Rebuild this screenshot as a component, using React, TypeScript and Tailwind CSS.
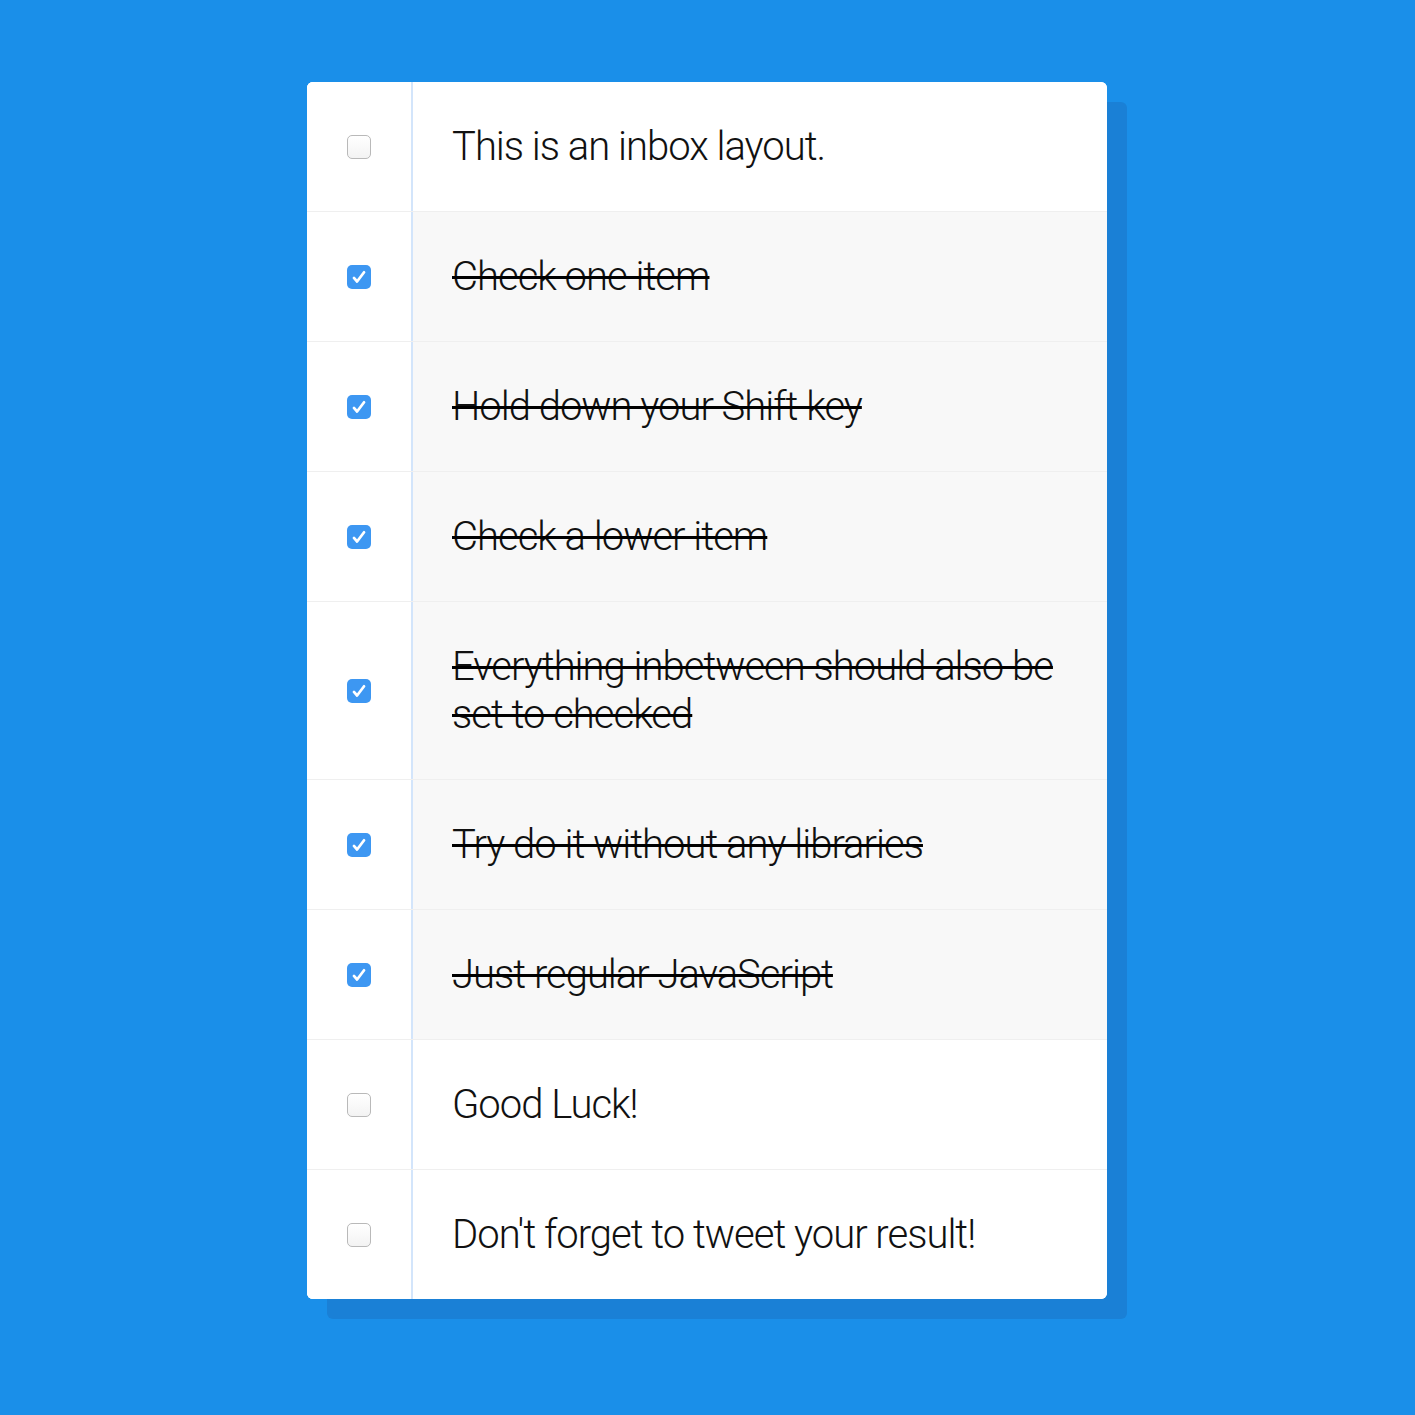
import { useState } from "react";

const initialItems = [
  { text: "This is an inbox layout.", done: false },
  { text: "Check one item", done: true },
  { text: "Hold down your Shift key", done: true },
  { text: "Check a lower item", done: true },
  { text: "Everything inbetween should also be set to checked", done: true },
  { text: "Try do it without any libraries", done: true },
  { text: "Just regular JavaScript", done: true },
  { text: "Good Luck!", done: false },
  { text: "Don't forget to tweet your result!", done: false },
];

export default function App() {
  const [items, setItems] = useState(initialItems);

  const toggle = (i: number) => {
    setItems(items.map((it, idx) => (idx === i ? { ...it, done: !it.done } : it)));
  };

  return (
    <div className="min-h-[1415px] bg-[#1a8fe9] pt-[82px] pb-[97px] font-['Helvetica_Neue',Roboto,sans-serif]">
      <div className="ml-[307px] w-[800px] bg-white rounded-[6px] overflow-hidden shadow-[20px_20px_0_#1a80d6]">
        {items.map((it, i) => (
          <div
            key={i}
            onClick={() => toggle(i)}
            className={`flex cursor-pointer ${i < items.length - 1 ? "border-b border-[#efefef]" : ""} ${
              it.done ? "bg-[#f8f8f8]" : "bg-white"
            }`}
          >
            <div className="w-[106px] shrink-0 flex items-center justify-center bg-white border-r-2 border-[#d3e5fb]">
              {it.done ? (
                <span className="w-6 h-6 rounded-[5px] bg-[#3d97f2] flex items-center justify-center">
                  <svg className="w-[18px] h-[18px]" viewBox="0 0 16 16" fill="none" stroke="white" strokeWidth="2.4" strokeLinecap="round" strokeLinejoin="round">
                    <path d="M3.5 8.8l2.8 3.2L12.5 3.8" />
                  </svg>
                </span>
              ) : (
                <span className="w-6 h-6 rounded-[5px] border border-[#b9b9b9] bg-gradient-to-b from-white to-[#f3f3f3]" />
              )}
            </div>
            <div
              className={`flex-1 pl-[39px] pr-[20px] pt-[41px] pb-[40px] text-[40px] leading-[48px] font-light text-[#111] tracking-[-1px] ${
                it.done ? "line-through decoration-[3px] decoration-black" : ""
              }`}
            >
              {it.text}
            </div>
          </div>
        ))}
      </div>
    </div>
  );
}
